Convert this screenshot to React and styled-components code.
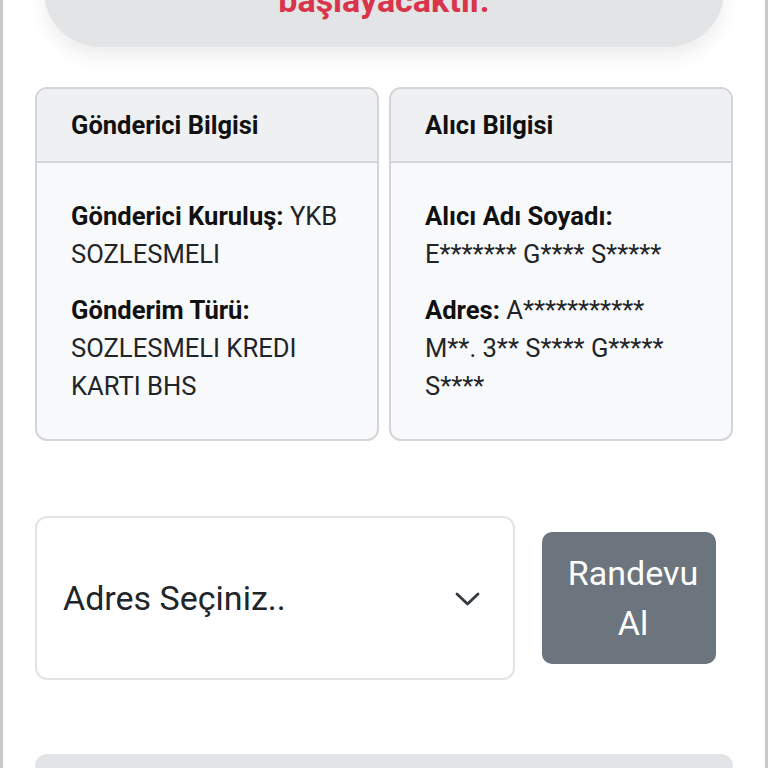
import React from "react";
import styled, { createGlobalStyle } from "styled-components";

const Global = createGlobalStyle`
  html, body { margin: 0; padding: 0; background: #fff; }
  body { font-family: Roboto, "Liberation Sans", sans-serif; color: #212529; overflow: hidden; }
  * { box-sizing: border-box; }
`;

const Page = styled.div`
  width: 768px;
  height: 768px;
  overflow: hidden;
  border-left: 3px solid #c9c9c9;
  border-right: 3px solid #c9c9c9;
  padding: 0 32px;
  display: flex;
  flex-direction: column;
`;

const Banner = styled.div`
  margin: -20px 9px 0;
  padding: 0 20px 27px;
  background: #e3e4e6;
  border-radius: 0 0 56px 56px;
  box-shadow: 0 10px 18px rgba(0, 0, 0, 0.07);
  text-align: center;
  color: #d9344a;
  font-weight: 700;
  font-size: 34px;
  line-height: 40px;
`;

const CardGrid = styled.div`
  margin-top: 40px;
  display: grid;
  grid-template-columns: 1fr 1fr;
  gap: 10px;
`;

const Card = styled.section`
  border: 2px solid #d4d5d8;
  border-radius: 12px;
  background: #f8f9fa;
  overflow: hidden;
  display: flex;
  flex-direction: column;
`;

const CardHeader = styled.header`
  height: 74px;
  display: flex;
  align-items: center;
  padding: 0 34px;
  background: #eff0f2;
  border-bottom: 2px solid #d4d5d8;
  font-weight: 700;
  font-size: 25.5px;
  color: #111;
`;

const CardBody = styled.div`
  padding: 34px 34px 34px;
  min-height: 276px;
`;

const Field = styled.p`
  margin: 0;
  font-size: 25.6px;
  line-height: 38px;
  color: #212529;
  & + & { margin-top: 18px; }
  b { font-weight: 700; color: #111; }
`;

const ActionRow = styled.div`
  margin-top: 75px;
  display: flex;
  align-items: center;
  gap: 27px;
`;

const Select = styled.div`
  width: 480px;
  height: 164px;
  background: #fff;
  border: 2px solid #e3e4e6;
  border-radius: 12px;
  display: flex;
  align-items: center;
  justify-content: space-between;
  padding: 0 33px 0 26px;
  font-size: 34px;
  color: #212529;
`;

const Chevron = styled.svg`
  width: 25px;
  height: 14px;
  flex: none;
  margin-top: 2px;
`;

const Button = styled.button`
  width: 174px;
  height: 132px;
  border: none;
  border-radius: 10px;
  background: #6c757d;
  color: #fff;
  font-family: Roboto, "Liberation Sans", sans-serif;
  font-size: 34px;
  line-height: 50px;
  padding: 0 12px 0 20px;
  text-align: center;
`;

const BottomBox = styled.div`
  margin-top: 74px;
  height: 80px;
  flex: none;
  background: #e3e4e6;
  border-radius: 12px;
`;

export default function App() {
  return (
    <>
      <Global />
      <Page>
        <Banner>başlayacaktır.</Banner>
        <CardGrid>
          <Card>
            <CardHeader>Gönderici Bilgisi</CardHeader>
            <CardBody>
              <Field>
                <b>Gönderici Kuruluş:</b> YKB SOZLESMELI
              </Field>
              <Field>
                <b>Gönderim Türü:</b> SOZLESMELI KREDI KARTI BHS
              </Field>
            </CardBody>
          </Card>
          <Card>
            <CardHeader>Alıcı Bilgisi</CardHeader>
            <CardBody>
              <Field>
                <b>Alıcı Adı Soyadı:</b> E******* G**** S*****
              </Field>
              <Field>
                <b>Adres:</b> A*********** M**. 3** S**** G***** S****
              </Field>
            </CardBody>
          </Card>
        </CardGrid>
        <ActionRow>
          <Select>
            <span>Adres Seçiniz..</span>
            <Chevron viewBox="0 0 25 14" fill="none">
              <path d="M2 2 L12.5 12 L23 2" stroke="#343a40" strokeWidth="2.8" strokeLinecap="round" strokeLinejoin="round" />
            </Chevron>
          </Select>
          <Button>Randevu Al</Button>
        </ActionRow>
        <BottomBox />
      </Page>
    </>
  );
}
